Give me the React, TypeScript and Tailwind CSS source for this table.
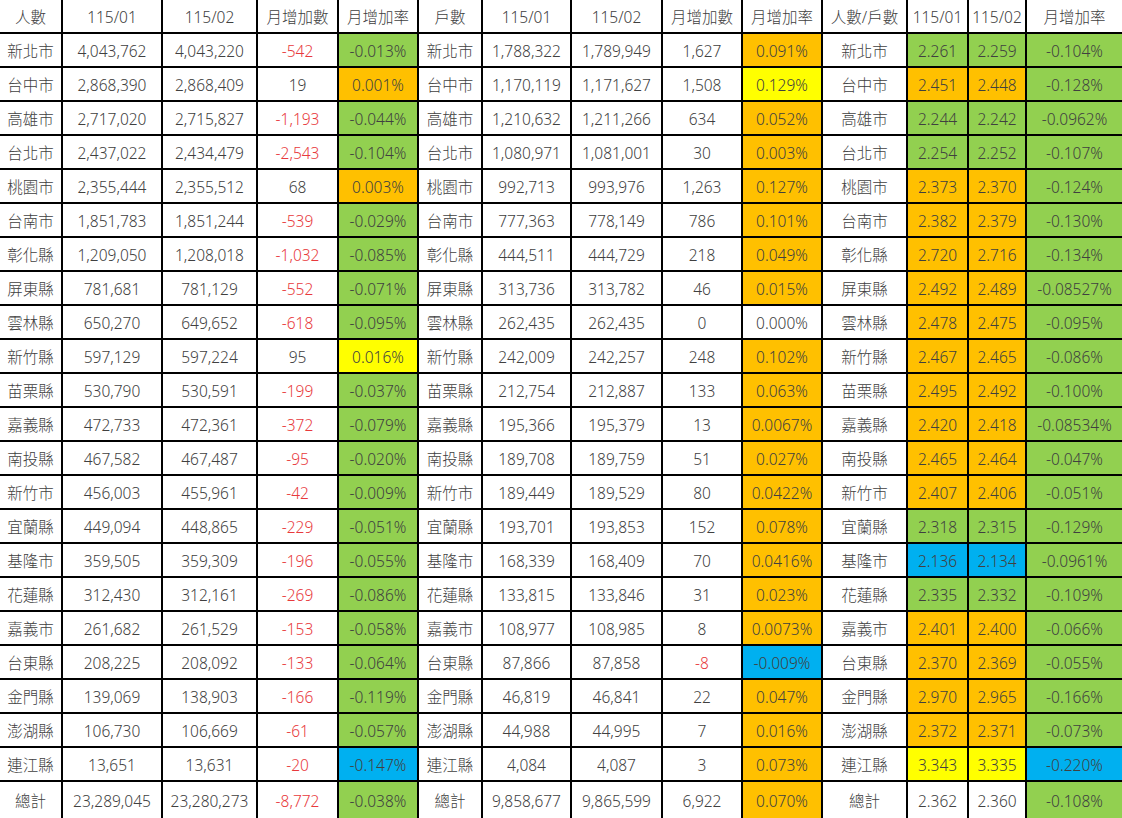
type Fill = "g" | "o" | "y" | "b" | "w"

const fillClass: Record<Fill, string> = {
  g: "bg-[#92d050]",
  o: "bg-[#ffc000]",
  y: "bg-[#ffff00]",
  b: "bg-[#00b0f0]",
  w: "bg-white",
}

// 人數
const people: [string, string, string, string, string, Fill][] = [
  ["新北市", "4,043,762", "4,043,220", "-542", "-0.013%", "g"],
  ["台中市", "2,868,390", "2,868,409", "19", "0.001%", "o"],
  ["高雄市", "2,717,020", "2,715,827", "-1,193", "-0.044%", "g"],
  ["台北市", "2,437,022", "2,434,479", "-2,543", "-0.104%", "g"],
  ["桃園市", "2,355,444", "2,355,512", "68", "0.003%", "o"],
  ["台南市", "1,851,783", "1,851,244", "-539", "-0.029%", "g"],
  ["彰化縣", "1,209,050", "1,208,018", "-1,032", "-0.085%", "g"],
  ["屏東縣", "781,681", "781,129", "-552", "-0.071%", "g"],
  ["雲林縣", "650,270", "649,652", "-618", "-0.095%", "g"],
  ["新竹縣", "597,129", "597,224", "95", "0.016%", "y"],
  ["苗栗縣", "530,790", "530,591", "-199", "-0.037%", "g"],
  ["嘉義縣", "472,733", "472,361", "-372", "-0.079%", "g"],
  ["南投縣", "467,582", "467,487", "-95", "-0.020%", "g"],
  ["新竹市", "456,003", "455,961", "-42", "-0.009%", "g"],
  ["宜蘭縣", "449,094", "448,865", "-229", "-0.051%", "g"],
  ["基隆市", "359,505", "359,309", "-196", "-0.055%", "g"],
  ["花蓮縣", "312,430", "312,161", "-269", "-0.086%", "g"],
  ["嘉義市", "261,682", "261,529", "-153", "-0.058%", "g"],
  ["台東縣", "208,225", "208,092", "-133", "-0.064%", "g"],
  ["金門縣", "139,069", "138,903", "-166", "-0.119%", "g"],
  ["澎湖縣", "106,730", "106,669", "-61", "-0.057%", "g"],
  ["連江縣", "13,651", "13,631", "-20", "-0.147%", "b"],
  ["總計", "23,289,045", "23,280,273", "-8,772", "-0.038%", "g"],
]

// 戶數
const households: [string, string, string, string, string, Fill][] = [
  ["新北市", "1,788,322", "1,789,949", "1,627", "0.091%", "o"],
  ["台中市", "1,170,119", "1,171,627", "1,508", "0.129%", "y"],
  ["高雄市", "1,210,632", "1,211,266", "634", "0.052%", "o"],
  ["台北市", "1,080,971", "1,081,001", "30", "0.003%", "o"],
  ["桃園市", "992,713", "993,976", "1,263", "0.127%", "o"],
  ["台南市", "777,363", "778,149", "786", "0.101%", "o"],
  ["彰化縣", "444,511", "444,729", "218", "0.049%", "o"],
  ["屏東縣", "313,736", "313,782", "46", "0.015%", "o"],
  ["雲林縣", "262,435", "262,435", "0", "0.000%", "w"],
  ["新竹縣", "242,009", "242,257", "248", "0.102%", "o"],
  ["苗栗縣", "212,754", "212,887", "133", "0.063%", "o"],
  ["嘉義縣", "195,366", "195,379", "13", "0.0067%", "o"],
  ["南投縣", "189,708", "189,759", "51", "0.027%", "o"],
  ["新竹市", "189,449", "189,529", "80", "0.0422%", "o"],
  ["宜蘭縣", "193,701", "193,853", "152", "0.078%", "o"],
  ["基隆市", "168,339", "168,409", "70", "0.0416%", "o"],
  ["花蓮縣", "133,815", "133,846", "31", "0.023%", "o"],
  ["嘉義市", "108,977", "108,985", "8", "0.0073%", "o"],
  ["台東縣", "87,866", "87,858", "-8", "-0.009%", "b"],
  ["金門縣", "46,819", "46,841", "22", "0.047%", "o"],
  ["澎湖縣", "44,988", "44,995", "7", "0.016%", "o"],
  ["連江縣", "4,084", "4,087", "3", "0.073%", "o"],
  ["總計", "9,858,677", "9,865,599", "6,922", "0.070%", "o"],
]

// 人數/戶數
const ratio: [string, string, string, Fill, string, Fill][] = [
  ["新北市", "2.261", "2.259", "g", "-0.104%", "g"],
  ["台中市", "2.451", "2.448", "o", "-0.128%", "g"],
  ["高雄市", "2.244", "2.242", "g", "-0.0962%", "g"],
  ["台北市", "2.254", "2.252", "g", "-0.107%", "g"],
  ["桃園市", "2.373", "2.370", "o", "-0.124%", "g"],
  ["台南市", "2.382", "2.379", "o", "-0.130%", "g"],
  ["彰化縣", "2.720", "2.716", "o", "-0.134%", "g"],
  ["屏東縣", "2.492", "2.489", "o", "-0.08527%", "g"],
  ["雲林縣", "2.478", "2.475", "o", "-0.095%", "g"],
  ["新竹縣", "2.467", "2.465", "o", "-0.086%", "g"],
  ["苗栗縣", "2.495", "2.492", "o", "-0.100%", "g"],
  ["嘉義縣", "2.420", "2.418", "o", "-0.08534%", "g"],
  ["南投縣", "2.465", "2.464", "o", "-0.047%", "g"],
  ["新竹市", "2.407", "2.406", "o", "-0.051%", "g"],
  ["宜蘭縣", "2.318", "2.315", "g", "-0.129%", "g"],
  ["基隆市", "2.136", "2.134", "b", "-0.0961%", "g"],
  ["花蓮縣", "2.335", "2.332", "g", "-0.109%", "g"],
  ["嘉義市", "2.401", "2.400", "o", "-0.066%", "g"],
  ["台東縣", "2.370", "2.369", "o", "-0.055%", "g"],
  ["金門縣", "2.970", "2.965", "o", "-0.166%", "g"],
  ["澎湖縣", "2.372", "2.371", "o", "-0.073%", "g"],
  ["連江縣", "3.343", "3.335", "y", "-0.220%", "b"],
  ["總計", "2.362", "2.360", "w", "-0.108%", "g"],
]

const header = [
  "人數", "115/01", "115/02", "月增加數", "月增加率",
  "戶數", "115/01", "115/02", "月增加數", "月增加率",
  "人數/戶數", "115/01", "115/02", "月增加率",
]

const Cell: React.FC<{
  children: React.ReactNode
  fill?: Fill
  red?: boolean
  last?: boolean
  bottom?: boolean
}> = ({ children, fill = "w", red, last, bottom }) => (
  <div
    className={[
      "flex items-center justify-center whitespace-nowrap border-black pt-[3px]",
      bottom ? "" : "border-b-2",
      last ? "" : "border-r-2",
      fillClass[fill],
      red ? "text-[#e8393c]" : "text-[#404040]",
    ].join(" ")}
  >
    {children}
  </div>
)

export default function App() {
  return (
    <div
      className="grid h-[818px] w-[1122px] grid-cols-[63px_100px_95px_81px_80px_64px_89px_91px_80px_80px_85px_61px_58px_95px] grid-rows-[repeat(23,34px)_36px] bg-white text-[15.5px] font-light"
      style={{ fontFamily: '"Noto Sans", "Noto Sans CJK TC", sans-serif' }}
    >
      {header.map((h, i) => (
        <Cell key={"h" + i} last={i === 13}>
          {h}
        </Cell>
      ))}
      {people.map((p, r) => {
        const h = households[r]
        const q = ratio[r]
        const bottom = r === people.length - 1
        return [
          <Cell key={r + "a"} bottom={bottom}>{p[0]}</Cell>,
          <Cell key={r + "b"} bottom={bottom}>{p[1]}</Cell>,
          <Cell key={r + "c"} bottom={bottom}>{p[2]}</Cell>,
          <Cell key={r + "d"} bottom={bottom} red={p[3].startsWith("-")}>{p[3]}</Cell>,
          <Cell key={r + "e"} bottom={bottom} fill={p[5]}>{p[4]}</Cell>,
          <Cell key={r + "f"} bottom={bottom}>{h[0]}</Cell>,
          <Cell key={r + "g"} bottom={bottom}>{h[1]}</Cell>,
          <Cell key={r + "h"} bottom={bottom}>{h[2]}</Cell>,
          <Cell key={r + "i"} bottom={bottom} red={h[3].startsWith("-")}>{h[3]}</Cell>,
          <Cell key={r + "j"} bottom={bottom} fill={h[5]}>{h[4]}</Cell>,
          <Cell key={r + "k"} bottom={bottom}>{q[0]}</Cell>,
          <Cell key={r + "l"} bottom={bottom} fill={q[3]}>{q[1]}</Cell>,
          <Cell key={r + "m"} bottom={bottom} fill={q[3]}>{q[2]}</Cell>,
          <Cell key={r + "n"} bottom={bottom} fill={q[5]} last>{q[4]}</Cell>,
        ]
      })}
    </div>
  )
}
